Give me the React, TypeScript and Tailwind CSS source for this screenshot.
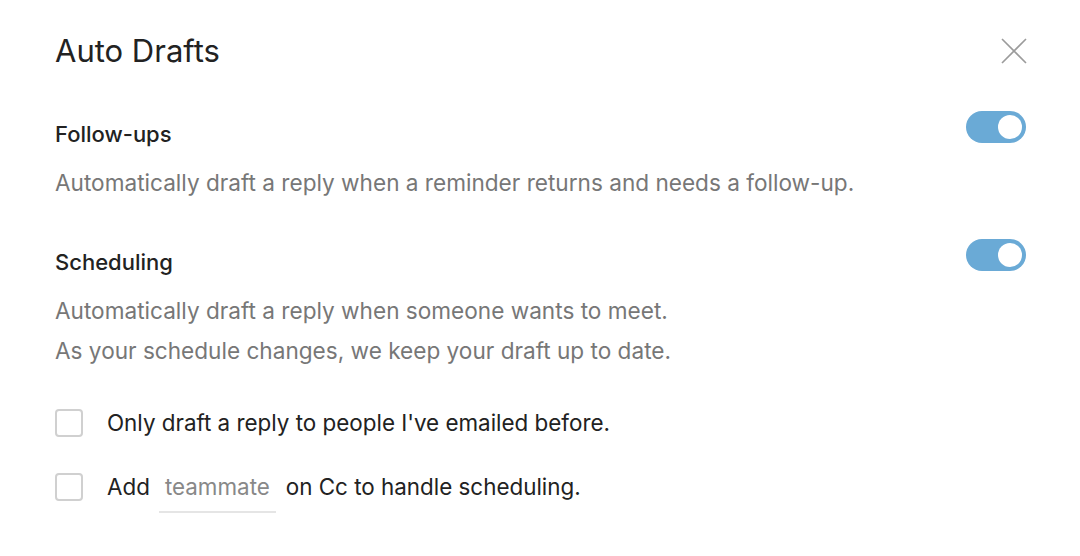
import React from "react";

function Toggle() {
  return (
    <div className="w-[60px] h-[32px] rounded-full bg-[#6aaad6] flex items-center justify-end pr-[4px] shrink-0">
      <div className="w-[24px] h-[24px] rounded-full bg-white" />
    </div>
  );
}

function Checkbox() {
  return <div className="w-[28px] h-[28px] rounded-[4px] border-2 border-[#d0d0d0] bg-white shrink-0" />;
}

export default function App() {
  return (
    <div className="w-[1080px] h-[556px] bg-white text-[#222]" style={{ fontFamily: "Inter, 'Noto Sans', sans-serif" }}>
      <div className="px-[55px] pt-[30px]">
        <div className="flex items-center justify-between">
          <h1 className="text-[31px] leading-[42px] font-normal">Auto Drafts</h1>
          <svg width="26" height="26" viewBox="0 0 26 26" className="mr-[-2px]">
            <path d="M1 1L25 25M25 1L1 25" stroke="#9b9b9b" strokeWidth="1.6" />
          </svg>
        </div>

        <div className="mt-[48px] flex items-start justify-between">
          <div className="text-[22px] leading-[28px] font-medium">Follow-ups</div>
          <div className="mt-[-9px] mr-[-1px]">
            <Toggle />
          </div>
        </div>
        <div className="mt-[15px] text-[22.6px] leading-[40px] text-[#777]">
          Automatically draft a reply when a reminder returns and needs a follow-up.
        </div>

        <div className="mt-[45px] flex items-start justify-between">
          <div className="text-[22px] leading-[28px] font-medium">Scheduling</div>
          <div className="mt-[-9px] mr-[-1px]">
            <Toggle />
          </div>
        </div>
        <div className="mt-[15px] text-[22.6px] leading-[40px] text-[#777]">
          <div>Automatically draft a reply when someone wants to meet.</div>
          <div>As your schedule changes, we keep your draft up to date.</div>
        </div>

        <div className="mt-[38px] flex items-center gap-[24px]">
          <Checkbox />
          <span className="text-[22.4px] leading-[28px]">Only draft a reply to people I've emailed before.</span>
        </div>
        <div className="mt-[36px] flex items-center gap-[24px]">
          <Checkbox />
          <span className="text-[22.4px] leading-[28px] flex items-center">
            Add
            <span className="ml-[9px] mr-[10px] relative px-[6px] text-[#888]">
              teammate
              <span className="absolute left-0 right-0 bottom-[-12px] h-[2px] bg-[#e5e5e5]" />
            </span>
            on Cc to handle scheduling.
          </span>
        </div>
      </div>
    </div>
  );
}
